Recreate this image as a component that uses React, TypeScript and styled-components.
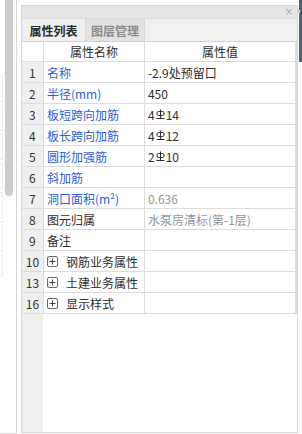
import React from "react";
import styled, { createGlobalStyle } from "styled-components";

const GlobalStyle = createGlobalStyle`
    html, body {
        margin: 0;
        padding: 0;
        background: #ffffff;
    }
    body {
        font-family: "Noto Sans CJK SC", "Noto Sans", sans-serif;
        font-size: 12px;
        color: #333;
    }
`;

const Screen = styled.div`
    display: flex;
    align-items: flex-start;
    width: 302px;
    height: 434px;
    overflow: hidden;
`;

const SideStrip = styled.div`
    display: flex;
    gap: 2px;
    width: 16px;
    height: 433px;
    border-right: 1px solid #d9d9d9;
    border-bottom: 1px solid #d9d9d9;
    margin-right: 4px;
`;

const GhostColumn = styled.div`
    display: flex;
    flex-direction: column;
    gap: 3px;
    width: 3px;
    padding-top: 76px;
`;

const GhostBox = styled.div`
    height: 24px;
    border: 1px solid #ededed;
    border-left: none;
`;

const Thumb = styled.div`
    width: 8px;
    height: 196px;
    background: #cdcdcd;
    border-radius: 0 0 4px 4px;
`;

const Panel = styled.div`
    box-sizing: border-box;
    display: flex;
    flex-direction: column;
    width: 278px;
    height: 428px;
    margin-top: 5px;
    border: 1px solid #d6d6d6;
`;

const TitleBar = styled.div`
    display: flex;
    align-items: center;
    justify-content: flex-end;
    height: 12px;
    padding-right: 4px;
    background: #e6e6e6;
`;

const CloseMark = styled.span`
    font-family: "DejaVu Sans", sans-serif;
    font-size: 10px;
    line-height: 12px;
    color: #a8a8a8;
`;

const TabBar = styled.div`
    display: flex;
    height: 22px;
    background: #f0f0f0;
    border-top: 1px solid #dddddd;
    border-bottom: 1px solid #d2d2d2;
`;

const Tab = styled.div<{ $active?: boolean }>`
    box-sizing: border-box;
    display: flex;
    align-items: center;
    justify-content: center;
    width: ${(p) => (p.$active ? "64px" : "59px")};
    font-size: 12px;
    font-weight: 700;
    color: ${(p) => (p.$active ? "#2b2b2b" : "#8c8c8c")};
    background: ${(p) => (p.$active ? "#f0f0f0" : "#e2e2e2")};
    border-right: 1px solid #d6d6d6;
`;

const Body = styled.div`
    flex: 1;
    background: linear-gradient(to right, #efefef 21px, #ffffff 21px);
`;

const Grid = styled.div`
    width: 274px;
    border-right: 1px solid #dcdcdc;
    background: #ffffff;
`;

const Row = styled.div<{ $head?: boolean }>`
    display: grid;
    grid-template-columns: 21px 100px 150px;
    column-gap: 1px;
    height: ${(p) => (p.$head ? "19px" : "20px")};
    border-bottom: 1px solid #dcdcdc;
    background: #dcdcdc;
`;

const NumCell = styled.div<{ $head?: boolean }>`
    display: flex;
    align-items: center;
    justify-content: center;
    background: ${(p) => (p.$head ? "#ffffff" : "#efefef")};
    color: #333;
`;

const Cell = styled.div<{ $tone?: "link" | "plain" | "muted"; $center?: boolean }>`
    display: flex;
    align-items: center;
    justify-content: ${(p) => (p.$center ? "center" : "flex-start")};
    padding-left: ${(p) => (p.$center ? "0" : "3px")};
    background: #ffffff;
    white-space: nowrap;
    overflow: hidden;
    color: ${(p) =>
        p.$tone === "link" ? "#2a60d8" : p.$tone === "muted" ? "#959595" : "#2e2e2e"};
`;

const PlusBox = styled.span`
    box-sizing: border-box;
    display: inline-flex;
    align-items: center;
    justify-content: center;
    width: 11px;
    height: 11px;
    margin-right: 8px;
    border: 1px solid #6a6a6a;
    border-radius: 2px;
`;

const RebarMark = styled.svg`
    width: 9px;
    height: 11px;
    margin: 0 1px;
`;

const Rebar = () => (
    <RebarMark viewBox="0 0 9 11">
        <rect x="1" y="2.5" width="7" height="4" rx="1.5" fill="none" stroke="#2e2e2e" strokeWidth="1" />
        <line x1="4.5" y1="0.5" x2="4.5" y2="10" stroke="#2e2e2e" strokeWidth="1" />
        <line x1="0.5" y1="9.5" x2="8.5" y2="9.5" stroke="#2e2e2e" strokeWidth="1" />
    </RebarMark>
);

const Plus = () => (
    <PlusBox>
        <svg width="7" height="7" viewBox="0 0 7 7">
            <line x1="0.5" y1="3.5" x2="6.5" y2="3.5" stroke="#444" strokeWidth="1" />
            <line x1="3.5" y1="0.5" x2="3.5" y2="6.5" stroke="#444" strokeWidth="1" />
        </svg>
    </PlusBox>
);

const RightBar = styled.div`
    position: relative;
    width: 3px;
    height: 62px;
    margin-left: 1px;
    background: #56606b;
`;

const Notch = styled.span`
    position: absolute;
    top: 10px;
    left: -1px;
    width: 2px;
    height: 3px;
    background: #c7ccd1;
`;

type Prop = {
    no: string;
    name: string;
    value?: React.ReactNode;
    nameTone?: "link" | "plain";
    valueTone?: "plain" | "muted";
    group?: boolean;
};

const rows: Prop[] = [
    { no: "1", name: "名称", value: "-2.9处预留口", nameTone: "link" },
    { no: "2", name: "半径(mm)", value: "450", nameTone: "link" },
    { no: "3", name: "板短跨向加筋", value: <>4<Rebar />14</>, nameTone: "link" },
    { no: "4", name: "板长跨向加筋", value: <>4<Rebar />12</>, nameTone: "link" },
    { no: "5", name: "圆形加强筋", value: <>2<Rebar />10</>, nameTone: "link" },
    { no: "6", name: "斜加筋", nameTone: "link" },
    { no: "7", name: "洞口面积(m²)", value: "0.636", nameTone: "link", valueTone: "muted" },
    { no: "8", name: "图元归属", value: "水泵房清标(第-1层)", valueTone: "muted" },
    { no: "9", name: "备注" },
    { no: "10", name: "钢筋业务属性", group: true },
    { no: "13", name: "土建业务属性", group: true },
    { no: "16", name: "显示样式", group: true },
];

export default function App() {
    return (
        <>
            <GlobalStyle />
            <Screen>
                <SideStrip>
                    <GhostColumn>
                        {Array.from({ length: 7 }).map((_, i) => (
                            <GhostBox key={i} />
                        ))}
                    </GhostColumn>
                    <Thumb />
                </SideStrip>
                <Panel>
                    <TitleBar>
                        <CloseMark>×</CloseMark>
                    </TitleBar>
                    <TabBar>
                        <Tab $active>属性列表</Tab>
                        <Tab>图层管理</Tab>
                    </TabBar>
                    <Body>
                        <Grid>
                            <Row $head>
                                <NumCell $head />
                                <Cell $center>属性名称</Cell>
                                <Cell $center>属性值</Cell>
                            </Row>
                            {rows.map((r) => (
                                <Row key={r.no}>
                                    <NumCell>{r.no}</NumCell>
                                    <Cell $tone={r.nameTone ?? "plain"}>
                                        {r.group && <Plus />}
                                        {r.name}
                                    </Cell>
                                    <Cell $tone={r.valueTone ?? "plain"}>{r.value}</Cell>
                                </Row>
                            ))}
                        </Grid>
                    </Body>
                </Panel>
                <RightBar>
                    <Notch />
                </RightBar>
            </Screen>
        </>
    );
}
